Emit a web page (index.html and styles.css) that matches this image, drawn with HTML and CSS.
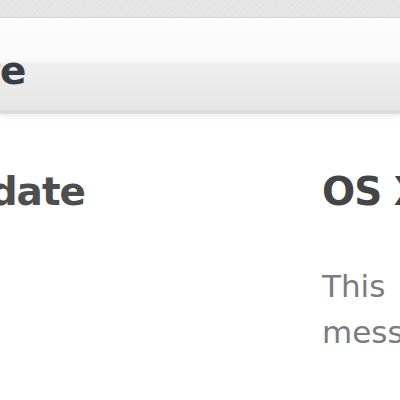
FILE: index.html
```html
<!DOCTYPE html>
<html>
<head>
<meta charset="utf-8">
<link rel="stylesheet" href="styles.css">
</head>
<body>
<div class="page">
  <div class="topband"></div>
  <header class="toolbar">
    <div class="title-clip"><span class="title">Software Update</span></div>
  </header>
  <main class="content">
    <section class="col-left">
      <h2 class="heading clip-right"><span>Update</span></h2>
    </section>
    <section class="col-right">
      <h2 class="heading">OS X Lion Update</h2>
      <p class="desc">This update is recommended<br>messages and stability</p>
    </section>
  </main>
</div>
</body>
</html>
```
FILE: styles.css
```css
html, body {
  margin: 0;
  padding: 0;
  background: #ffffff;
}
.page {
  width: 400px;
  height: 400px;
  overflow: hidden;
  font-family: "DejaVu Sans", "Liberation Sans", sans-serif;
}
.topband {
  height: 17px;
  background-color: #e5e5e5;
  background-image:
    repeating-linear-gradient(45deg, rgba(255,255,255,0.12) 0 1px, transparent 1px 4px),
    repeating-linear-gradient(-45deg, rgba(0,0,0,0.015) 0 1px, transparent 1px 5px);
  border-bottom: 1px solid #d6d6d6;
}
.toolbar {
  height: 92px;
  background: linear-gradient(#fefefe 0%, #f8f8f8 47%, #eeeeee 50%, #e6e6e6 100%);
  border-bottom: 4px solid #dcdcdc;
  box-shadow: 0 3px 6px rgba(0,0,0,0.07);
  position: relative;
  z-index: 1;
}
.title-clip {
  width: 26px;
  display: flex;
  justify-content: flex-end;
  padding-top: 33px;
}
.title {
  white-space: nowrap;
  font-size: 39px;
  line-height: 39px;
  font-weight: bold;
  color: #3a3c48;
  letter-spacing: -0.5px;
}
.content {
  display: flex;
  padding-top: 58px;
}
.col-left {
  width: 85px;
  flex: none;
}
.col-right {
  margin-left: 237px;
  flex: none;
  white-space: nowrap;
}
.heading {
  margin: 0;
  font-size: 39px;
  line-height: 39px;
  font-weight: bold;
  color: #454545;
  white-space: nowrap;
  letter-spacing: -1px;
}
.clip-right {
  display: flex;
  justify-content: flex-end;
  color: #4e4e4e;
}
.desc {
  margin: 52px 0 0;
  font-size: 31px;
  line-height: 46px;
  color: #7c7c7c;
  word-spacing: 8px;
}
```
